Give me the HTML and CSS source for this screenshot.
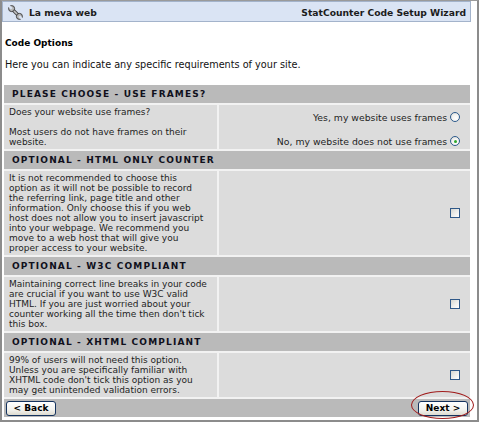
FILE: index.html
```html
<!DOCTYPE html>
<html>
<head>
<meta charset="utf-8">
<link rel="stylesheet" href="styles.css">
</head>
<body>
<div class="frame">
  <div class="topbar">
    <div class="brand">
      <svg class="tool-icon" width="15" height="15" viewBox="0 0 15 15">
        <path d="M4 4 L11 11" stroke="#4a4a4a" stroke-width="3.4" stroke-linecap="round"/>
        <path d="M4 4 L11 11" stroke="#c4c4c4" stroke-width="1.6" stroke-linecap="round"/>
        <circle cx="3.6" cy="3.6" r="3" fill="#b8b8b8" stroke="#404040" stroke-width="1"/>
        <circle cx="11.4" cy="11.4" r="3" fill="#b8b8b8" stroke="#404040" stroke-width="1"/>
        <rect x="-1.1" y="-4.5" width="2.2" height="4.6" fill="#dae4f4" transform="translate(3.6 3.6) rotate(-45)"/>
        <rect x="-1.1" y="-4.5" width="2.2" height="4.6" fill="#dae4f4" transform="translate(11.4 11.4) rotate(135)"/>
      </svg>
      <span>La meva web</span>
    </div>
    <div class="wizard">StatCounter Code Setup Wizard</div>
  </div>
  <div class="content">
    <h1 class="title">Code Options</h1>
    <p class="intro">Here you can indicate any specific requirements of your site.</p>
    <div class="options">
      <div class="sec-head">PLEASE CHOOSE - USE FRAMES?</div>
      <div class="sec-row">
        <div class="desc">Does your website use frames?<br><br>Most users do not have frames on their<br>website.</div>
        <div class="ctrl radios">
          <div class="opt">Yes, my website uses frames <span class="radio"></span></div>
          <div class="opt">No, my website does not use frames <span class="radio checked"></span></div>
        </div>
      </div>

      <div class="sec-head">OPTIONAL - HTML ONLY COUNTER</div>
      <div class="sec-row">
        <div class="desc">It is not recommended to choose this<br>option as it will not be possible to record<br>the referring link, page title and other<br>information. Only choose this if you web<br>host does not allow you to insert javascript<br>into your webpage. We recommend you<br>move to a web host that will give you<br>proper access to your website.</div>
        <div class="ctrl"><span class="check"></span></div>
      </div>

      <div class="sec-head">OPTIONAL - W3C COMPLIANT</div>
      <div class="sec-row">
        <div class="desc">Maintaining correct line breaks in your code<br>are crucial if you want to use W3C valid<br>HTML. If you are just worried about your<br>counter working all the time then don't tick<br>this box.</div>
        <div class="ctrl"><span class="check"></span></div>
      </div>

      <div class="sec-head">OPTIONAL - XHTML COMPLIANT</div>
      <div class="sec-row">
        <div class="desc">99% of users will not need this option.<br>Unless you are specifically familiar with<br>XHTML code don't tick this option as you<br>may get unintended validation errors.</div>
        <div class="ctrl"><span class="check"></span></div>
      </div>

      <div class="footer">
        <button class="btn">&lt; Back</button>
        <button class="btn">Next &gt;</button>
      </div>
    </div>
  </div>
  <div class="highlight"></div>
</div>
</body>
</html>
```

FILE: styles.css
```css
* { box-sizing: border-box; }
html, body { margin: 0; padding: 0; background: #ffffff; }
body {
  width: 480px;
  height: 423px;
  overflow: hidden;
  font-family: "DejaVu Sans", Verdana, sans-serif;
  color: #1a1a1a;
}
.frame {
  position: relative;
  width: 479px;
  height: 422px;
  border-top: 1px solid #9a9a9a;
  border-left: 2px solid #8c8c8c;
  border-right: 2px solid #8c8c8c;
  border-bottom: 2px solid #8c8c8c;
  padding-right: 6px;
}
.topbar {
  display: flex;
  justify-content: space-between;
  align-items: center;
  height: 21px;
  background: #dae4f4;
  border: 1px solid #a3b3cb;
  padding: 0 4px 0 5px;
  font-weight: bold;
  font-size: 9.2px;
  color: #1c1c1c;
}
.brand { display: flex; align-items: center; gap: 6px; }
.tool-icon { display: block; margin-top: 1px; }
.brand span, .wizard { padding-top: 2px; }
.content { padding-left: 2px; }
.title {
  margin: 15px 0 0 1px;
  font-size: 9px;
  line-height: 12px;
  font-weight: bold;
  color: #000;
}
.intro {
  margin: 10px 0 0 1px;
  font-size: 9.7px;
  line-height: 12px;
  color: #111;
}
.options {
  margin-top: 14px;
  width: 466px;
  display: flex;
  flex-direction: column;
  gap: 2px;
  background: #f2f2f2;
}
.sec-head {
  height: 18px;
  line-height: 18px;
  background: #bababa;
  padding-left: 8px;
  font-size: 9px;
  font-weight: bold;
  letter-spacing: 1.15px;
  color: #10101c;
}
.sec-row {
  display: grid;
  grid-template-columns: 213px 1fr;
  column-gap: 2px;
}
.desc {
  background: #dcdcdc;
  padding: 2px 4px 2px 5px;
  font-size: 9px;
  line-height: 10px;
  color: #1e1e1e;
}
.ctrl {
  background: #dcdcdc;
  display: flex;
  justify-content: flex-end;
  align-items: center;
  padding-right: 10px;
}
.radios {
  flex-direction: column;
  align-items: flex-end;
  justify-content: center;
  gap: 12px;
  padding-top: 4px;
  font-size: 9.3px;
  color: #1e1e1e;
}
.opt {
  display: flex;
  align-items: center;
  gap: 3px;
  height: 12px;
}
.radio {
  width: 10px;
  height: 10px;
  border-radius: 50%;
  border: 1px solid #2c5a8c;
  background: radial-gradient(circle at 60% 65%, #ffffff 0%, #f4f4f2 45%, #d4d4d0 100%);
  position: relative;
}
.radio.checked::after {
  content: "";
  position: absolute;
  left: 2.5px;
  top: 2.5px;
  width: 3px;
  height: 3px;
  border-radius: 50%;
  background: #2ea82e;
}
.check {
  width: 10px;
  height: 10px;
  border: 1px solid #2f5888;
  background: linear-gradient(135deg, #d6d6d0 0%, #ececea 50%, #ffffff 100%);
}
.footer {
  height: 18px;
  background: #bababa;
  display: flex;
  justify-content: space-between;
  align-items: center;
  padding: 0 2px;
}
.btn {
  width: 50px;
  height: 15px;
  padding: 0;
  border: 1px solid #14325e;
  border-radius: 3px;
  background: linear-gradient(#ffffff 0%, #f3f3ef 60%, #dedbd0 100%);
  font-family: "DejaVu Sans", Verdana, sans-serif;
  font-size: 9px;
  font-weight: bold;
  color: #000;
  line-height: 13px;
}
.highlight {
  position: absolute;
  left: 409px;
  top: 390px;
  width: 63px;
  height: 28px;
  border: 1.5px solid #a01c1c;
  border-radius: 50%;
}
```
